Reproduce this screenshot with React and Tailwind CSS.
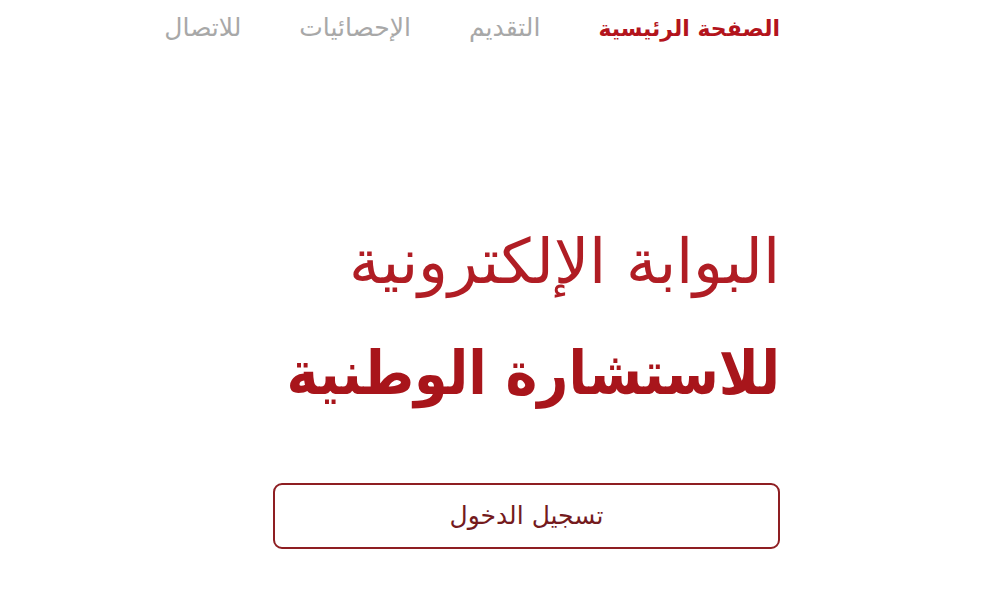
export default function App() {
    const navItems = [
        { label: "الصفحة الرئيسية", active: true },
        { label: "التقديم", active: false },
        { label: "الإحصائيات", active: false },
        { label: "للاتصال", active: false },
    ];

    return (
        <div dir="rtl" className="w-[1000px] h-[599px] bg-white overflow-hidden" style={{ fontFamily: '"DejaVu Sans", sans-serif' }}>
            <nav className="flex items-center gap-[58px] pr-[220px] pt-[15px] h-[41px]">
                {navItems.map((item) => (
                    <a
                        key={item.label}
                        className={item.active ? "text-[22px] font-bold text-[#b3141c]" : "text-[25px] text-[#a8a8a8]"}
                    >
                        {item.label}
                    </a>
                ))}
            </nav>
            <div className="w-[507px] mr-[220px] mt-[190px] flex flex-col">
                <h1 className="text-[62px] font-light leading-none text-[#b01d24]">البوابة الإلكترونية</h1>
                <h2 className="mt-[50px] text-[60px] font-bold leading-none text-[#a8151b]" style={{ fontFamily: '"DejaVu Sans Condensed", "DejaVu Sans", sans-serif' }}>للاستشارة الوطنية</h2>
                <button className="mt-[80px] h-[66px] w-full rounded-[9px] border-2 border-[#8e1e22] text-[25px] text-[#741a1d]">
                    تسجيل الدخول
                </button>
            </div>
        </div>
    );
}
